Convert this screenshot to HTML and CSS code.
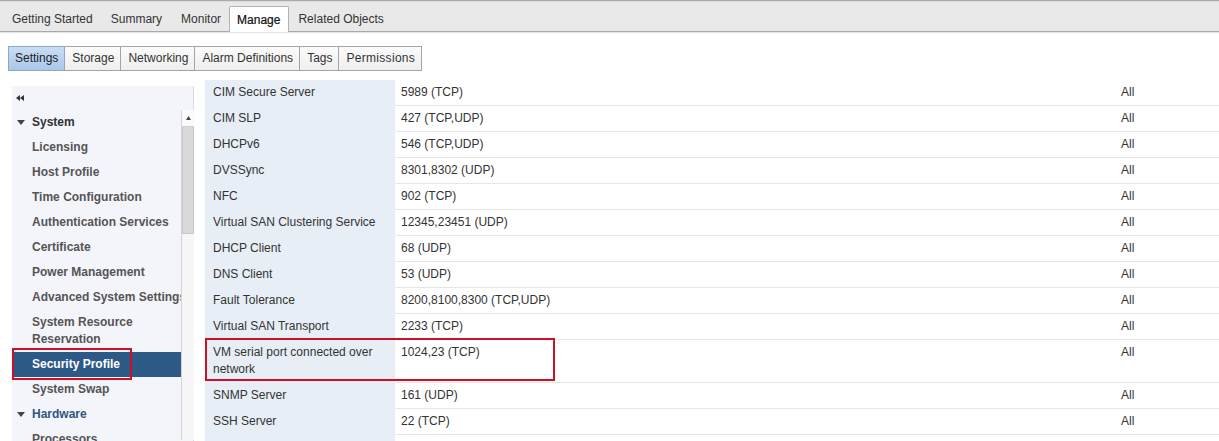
FILE: index.html
```html
<!DOCTYPE html>
<html>
<head>
<meta charset="utf-8">
<link rel="stylesheet" href="styles.css">
</head>
<body>
<div class="tabs">
  <div class="tab">Getting Started</div>
  <div class="tab">Summary</div>
  <div class="tab">Monitor</div>
  <div class="tab active">Manage</div>
  <div class="tab">Related Objects</div>
</div>
<div class="subtabs">
  <div class="subtab selected">Settings</div>
  <div class="subtab">Storage</div>
  <div class="subtab">Networking</div>
  <div class="subtab">Alarm Definitions</div>
  <div class="subtab">Tags</div>
  <div class="subtab wide">Permissions</div>
</div>
<div class="content">
  <div class="sidebar">
    <div class="side-head">
      <svg width="8" height="6" viewBox="0 0 8 6"><path d="M0 3 L4 0 L4 6 Z M4 3 L8 0 L8 6 Z" fill="#333"/></svg>
    </div>
    <div class="side-body">
      <div class="list">
        <div class="item group"><svg class="tri" width="8" height="5" viewBox="0 0 8 5"><path d="M0 0 L8 0 L4 5 Z" fill="#444"/></svg>System</div>
        <div class="item">Licensing</div>
        <div class="item">Host Profile</div>
        <div class="item">Time Configuration</div>
        <div class="item">Authentication Services</div>
        <div class="item">Certificate</div>
        <div class="item">Power Management</div>
        <div class="item nowrap">Advanced System Settings</div>
        <div class="item">System Resource Reservation</div>
        <div class="item selected">Security Profile<div class="mark side-mark"></div></div>
        <div class="item">System Swap</div>
        <div class="item group hw"><svg class="tri" width="8" height="5" viewBox="0 0 8 5"><path d="M0 0 L8 0 L4 5 Z" fill="#444"/></svg>Hardware</div>
        <div class="item">Processors</div>
      </div>
      <div class="scrollbar">
        <div class="sb-btn"><svg width="5" height="4" viewBox="0 0 5 4"><path d="M2.5 0 L5 4 L0 4 Z" fill="#444"/></svg></div>
        <div class="sb-thumb"></div>
        <div class="sb-track"></div>
      </div>
    </div>
  </div>
  <table class="grid">
    <colgroup><col class="c1"><col class="c2"><col class="c3"></colgroup>
    <tr><td>CIM Secure Server</td><td>5989 (TCP)</td><td>All</td></tr>
    <tr><td>CIM SLP</td><td>427 (TCP,UDP)</td><td>All</td></tr>
    <tr><td>DHCPv6</td><td>546 (TCP,UDP)</td><td>All</td></tr>
    <tr><td>DVSSync</td><td>8301,8302 (UDP)</td><td>All</td></tr>
    <tr><td>NFC</td><td>902 (TCP)</td><td>All</td></tr>
    <tr><td>Virtual SAN Clustering Service</td><td>12345,23451 (UDP)</td><td>All</td></tr>
    <tr><td>DHCP Client</td><td>68 (UDP)</td><td>All</td></tr>
    <tr><td>DNS Client</td><td>53 (UDP)</td><td>All</td></tr>
    <tr><td>Fault Tolerance</td><td>8200,8100,8300 (TCP,UDP)</td><td>All</td></tr>
    <tr><td>Virtual SAN Transport</td><td>2233 (TCP)</td><td>All</td></tr>
    <tr class="hl"><td class="rel">VM serial port connected over<br>network<div class="mark row-mark"></div></td><td>1024,23 (TCP)</td><td>All</td></tr>
    <tr><td>SNMP Server</td><td>161 (UDP)</td><td>All</td></tr>
    <tr><td>SSH Server</td><td>22 (TCP)</td><td>All</td></tr>
    <tr><td>&nbsp;</td><td></td><td></td></tr>
  </table>
</div>
</body>
</html>
```
FILE: styles.css
```css
html, body {
  margin: 0;
  padding: 0;
  background: #fff;
  overflow: hidden;
}
body {
  font-family: "Liberation Sans", Arial, sans-serif;
  font-size: 12px;
  color: #333;
  width: 1219px;
  height: 441px;
}
.tabs {
  height: 30px;
  background: #e9e9e9;
  border-top: 1px solid #a9a9a9;
  border-bottom: 1px solid #a9a9a9;
  box-shadow: inset 0 1px 0 #dcdcdc, 0 1px 0 #e4e4e4;
  display: flex;
  align-items: flex-end;
  padding-left: 3px;
}
.tab {
  height: 25px;
  line-height: 23px;
  padding: 2px 9px 0;
  color: #333;
  box-sizing: border-box;
}
.tab:nth-child(2) {
  padding-right: 10px;
}
.tab:nth-child(3) {
  padding-right: 8px;
}
.tab.active {
  background: #fff;
  border: 1px solid #b3b3b3;
  border-bottom: none;
  border-radius: 2px 2px 0 0;
  margin-bottom: -1px;
  height: 26px;
  padding: 2px 8px 0 7px;
  color: #111;
  -webkit-text-stroke: 0.2px #111;
}
.subtabs {
  display: flex;
  margin: 14px 0 0 8px;
  height: 25px;
}
.subtab {
  height: 23px;
  line-height: 23px;
  padding: 0 6px 0 7px;
  border: 1px solid #a4a4a4;
  border-left: none;
  background: linear-gradient(#fbfbfb, #eeeeee);
  color: #333;
}
.subtab:first-child {
  border-left: 1px solid #a4a4a4;
  padding: 0 6px;
}
.subtab.wide {
  letter-spacing: 0.3px;
}
.subtab.selected {
  background: linear-gradient(#c9ddf4, #a9c8ec);
  border-color: #8fa7c4;
  color: #222;
}
.content {
  display: flex;
  align-items: flex-start;
  margin-top: 9px;
  padding-left: 12px;
}
.sidebar {
  width: 181px;
  margin-top: 6px;
  background: #f4f4fb;
  border-right: 1px solid #dcdce4;
  flex: none;
  height: 400px;
}
.side-head {
  height: 24px;
  display: flex;
  align-items: center;
  padding-left: 4px;
}
.side-body {
  display: flex;
}
.list {
  width: 169px;
  flex: none;
}
.item {
  padding: 4px 0 4px 20px;
  line-height: 17px;
  font-weight: bold;
  color: #555;
  position: relative;
}
.item.nowrap {
  white-space: nowrap;
  overflow: hidden;
}
.item.group {
  color: #333;
  padding-left: 5px;
}
.item.hw {
  color: #2f5580;
}
.tri {
  display: inline-block;
  margin-right: 7px;
  vertical-align: 1px;
}
.item.selected {
  background: #2d5986;
  color: #fff;
}
.mark {
  position: absolute;
  border: 2px solid #cc1126;
  box-sizing: border-box;
  pointer-events: none;
}
.side-mark {
  left: 0;
  top: -4px;
  width: 120px;
  height: 32px;
}
.scrollbar {
  width: 12px;
  flex: none;
  display: flex;
  flex-direction: column;
  border-left: 1px solid #d6d6d6;
  background: #f7f7f7;
  height: 330px;
}
.sb-btn {
  height: 16px;
  display: flex;
  align-items: center;
  justify-content: center;
  background: #fafafa;
  border-bottom: 1px solid #d0d0d0;
}
.sb-thumb {
  height: 106px;
  background: #d9d9d9;
  border: 1px solid #c8c8c8;
  border-top: none;
}
.sb-track {
  flex: 1;
  background: #f6f6f6;
}
.grid {
  border-collapse: collapse;
  table-layout: fixed;
  width: 1014px;
  margin-left: 11px;
  flex: none;
}
.c1 { width: 190px; }
.c2 { width: 718px; }
.c3 { width: 106px; }
.grid td {
  padding: 4px 6px 4px 8px;
  line-height: 17px;
  vertical-align: top;
  border-bottom: 1px solid #e6e6e6;
  color: #333;
}
.grid td:first-child {
  background: #e8eef5;
  border-bottom-color: #e8eef5;
}
.grid td:nth-child(2) {
  padding-left: 6px;
}
.rel {
  position: relative;
}
.row-mark {
  left: 0;
  top: -2px;
  width: 350px;
  height: 43px;
}
```
